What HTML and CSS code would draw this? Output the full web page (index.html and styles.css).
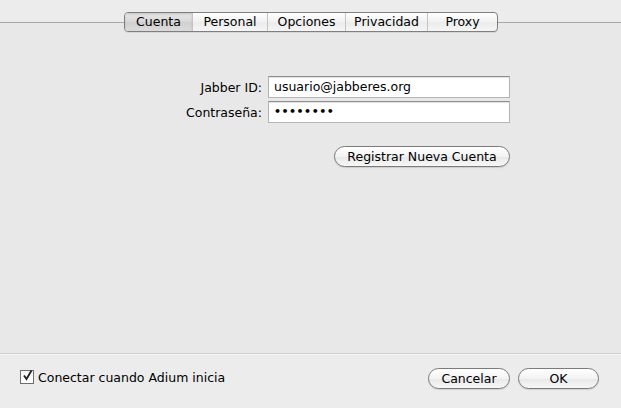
FILE: index.html
```html
<!DOCTYPE html>
<html lang="es">
<head>
<meta charset="utf-8">
<link rel="stylesheet" href="styles.css">
</head>
<body>
<div class="window">
  <div class="tabbar">
    <div class="rule"></div>
    <div class="tabs">
      <div class="tab selected">Cuenta</div>
      <div class="tab">Personal</div>
      <div class="tab">Opciones</div>
      <div class="tab">Privacidad</div>
      <div class="tab">Proxy</div>
    </div>
    <div class="rule"></div>
  </div>
  <div class="content">
    <div class="form">
      <label class="label">Jabber ID:</label>
      <div class="field">usuario@jabberes.org</div>
      <label class="label">Contraseña:</label>
      <div class="field dots">••••••••</div>
    </div>
    <div class="actions">
      <button class="btn register">Registrar Nueva Cuenta</button>
    </div>
  </div>
  <div class="footer">
    <div class="check">
      <span class="box"><svg width="13" height="13" viewBox="0 0 13 13"><path d="M3 6.5 L5.5 10 L10.5 1.5" fill="none" stroke="#222" stroke-width="1.8" stroke-linejoin="miter"/></svg></span>
      <span>Conectar cuando Adium inicia</span>
    </div>
    <div class="buttons">
      <button class="btn cancel">Cancelar</button>
      <button class="btn ok">OK</button>
    </div>
  </div>
</div>
</body>
</html>
```

FILE: styles.css
```css
html, body {
  margin: 0;
  padding: 0;
}
body {
  width: 621px;
  height: 408px;
  overflow: hidden;
  font-family: "DejaVu Sans", "Noto Sans", sans-serif;
  font-size: 12px;
  color: #000;
  background: #e8e8e8;
}
.window {
  display: flex;
  flex-direction: column;
  height: 408px;
}
.tabbar {
  display: flex;
  align-items: center;
  padding-top: 12px;
  height: 20px;
  background: linear-gradient(#ececec 0, #ececec 22px, #e8e8e8 22px);
}
.rule {
  flex: 1;
  height: 1px;
  background: #a9a9a9;
}
.rule:first-child {
  flex: 0 0 124px;
}
.tabs {
  display: flex;
  height: 18px;
  border: 1px solid #7f7f7f;
  border-radius: 4px;
  background: linear-gradient(#ffffff, #f1f1f1 50%, #ebebeb 51%, #f6f6f6);
  box-shadow: 0 1px 0 rgba(0,0,0,0.08);
  overflow: hidden;
  font-size: 12.5px;
}
.tab {
  display: flex;
  align-items: center;
  justify-content: center;
  border-left: 1px solid #c4c4c4;
  line-height: 18px;
}
.tab:first-child { border-left: none; width: 67px; }
.tab:nth-child(2) { width: 74px; }
.tab:nth-child(3) { width: 77px; }
.tab:nth-child(4) { width: 81px; }
.tab:nth-child(5) { width: 69px; }
.tab.selected {
  background: linear-gradient(#e6e6e6, #d8d8d8 50%, #cfcfcf 51%, #dcdcdc);
  box-shadow: inset 0 1px 2px rgba(0,0,0,0.15);
}
.content {
  flex: 1;
  display: flex;
  flex-direction: column;
  align-items: flex-end;
  padding: 44px 111px 0 0;
  border-bottom: 1px solid #cfcfcf;
}
.form {
  display: grid;
  grid-template-columns: auto 242px;
  column-gap: 6px;
  row-gap: 3px;
  align-items: center;
}
.label {
  text-align: right;
  font-size: 12.5px;
}
.field {
  height: 20px;
  line-height: 20px;
  padding: 0 5px;
  background: #fff;
  border: 1px solid #b5b5b5;
  border-top-color: #8d8d8d;
  box-shadow: inset 0 1px 1px rgba(0,0,0,0.12);
  font-size: 12.5px;
}
.field.dots {
  font-size: 11px;
  letter-spacing: 0.5px;
  font-weight: bold;
}
.actions {
  margin-top: 23px;
}
.btn {
  font-family: inherit;
  font-size: 12.5px;
  color: #000;
  height: 21px;
  padding: 0;
  border: 1px solid #7b7b7b;
  border-radius: 11px;
  background: linear-gradient(#ffffff, #f3f3f3 50%, #e8e8e8 51%, #f7f7f7);
  box-shadow: 0 1px 1px rgba(0,0,0,0.12);
}
.register { width: 176px; }
.footer {
  height: 47px;
  background: #ececec;
  display: flex;
  align-items: center;
  justify-content: space-between;
  padding: 0 22px 6px 20px;
  border-top: 1px solid #f6f6f6;
}
.check {
  display: flex;
  align-items: center;
  gap: 4px;
  font-size: 12.5px;
  margin-top: -3px;
}
.box {
  width: 12px;
  height: 12px;
  border: 1px solid #6e6e6e;
  background: linear-gradient(#f4f4f4, #ffffff);
  display: flex;
  position: relative;
}
.box svg {
  position: absolute;
  left: 0;
  top: -2px;
}
.buttons {
  display: flex;
  gap: 8px;
}
.cancel { width: 82px; }
.ok { width: 81px; }
```
